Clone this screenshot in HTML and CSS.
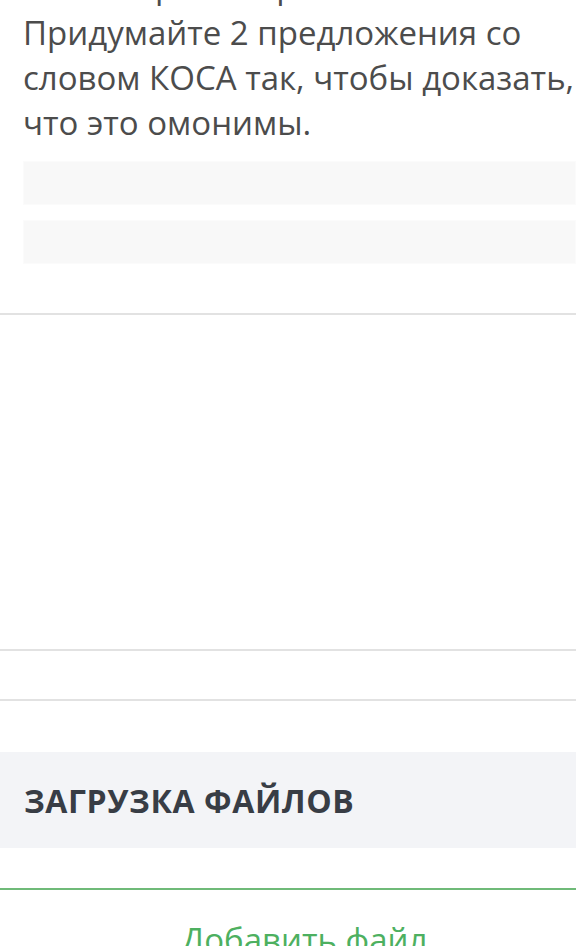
FILE: index.html
```html
<!DOCTYPE html>
<html lang="ru">
<head>
<meta charset="utf-8">
<link rel="stylesheet" href="styles.css">
</head>
<body>
<div class="page">
  <section class="question">
    <p class="q-text"><span class="prev-line">Затем просмотрите ответ.</span>Придумайте 2 предложения со словом КОСА так, чтобы доказать, что это омонимы.</p>
    <div class="answer-bar"></div>
    <div class="answer-bar"></div>
  </section>
  <div class="divider"></div>
  <div class="empty-area"></div>
  <div class="divider"></div>
  <div class="gap-row"></div>
  <div class="divider"></div>
  <section class="upload">
    <h2 class="upload-title">ЗАГРУЗКА ФАЙЛОВ</h2>
  </section>
  <div class="add-file">
    <span class="add-link">Добавить файл</span>
  </div>
</div>
</body>
</html>
```

FILE: styles.css
```css
html, body {
  margin: 0;
  padding: 0;
  background: #ffffff;
  overflow: hidden;
}

.page {
  width: 576px;
  height: 946px;
  overflow: hidden;
  font-family: "Open Sans", "Noto Sans", sans-serif;
}

.question {
  padding: 0 0 49px 23px;
  margin-top: -37px;
}

.q-text {
  margin: 0;
  font-size: 33px;
  line-height: 45px;
  color: #4c4c4c;
  width: 560px;
}

.prev-line {
  display: block;
  margin-bottom: 2px;
  letter-spacing: 1px;
}

.answer-bar {
  height: 42px;
  background: #f8f8f8;
  border: 1px solid #fbfbfb;
  margin-top: 16px;
}

.answer-bar + .answer-bar {
  margin-top: 15px;
}

.divider {
  height: 2px;
  background: #e2e2e2;
}

.empty-area {
  height: 334px;
}

.gap-row {
  height: 48px;
}

.upload {
  margin-top: 51px;
  background: #f3f4f7;
  height: 96px;
  display: flex;
  align-items: center;
  padding-left: 24px;
}

.upload-title {
  margin: 0;
  font-size: 32px;
  font-weight: 700;
  color: #383d45;
  letter-spacing: 0.6px;
}

.add-file {
  margin-top: 40px;
  border-top: 2px solid #6fba78;
  display: flex;
  justify-content: center;
  padding-top: 27px;
  padding-left: 33px;
}

.add-link {
  font-size: 33px;
  line-height: 45px;
  color: #4db060;
}
```
